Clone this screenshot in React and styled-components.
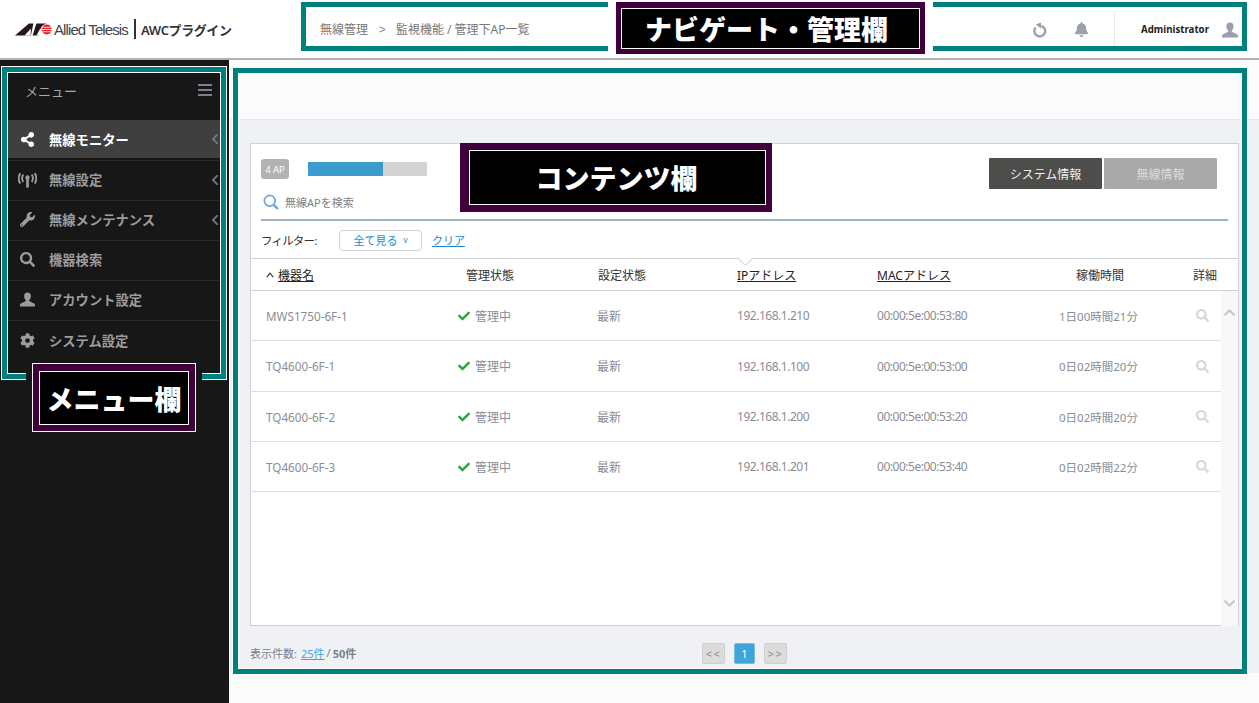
import React from "react";
import styled, { createGlobalStyle } from "styled-components";
import {
  FaShareAlt,
  FaWrench,
  FaSearch,
  FaCog,
  FaCheck,
  FaBell,
  FaChevronLeft,
  FaChevronUp,
  FaChevronDown,
} from "react-icons/fa";

const FONT = `"Noto Sans", "Noto Sans CJK JP", sans-serif`;

const menuItems = [
  { label: "無線モニター", icon: <FaShareAlt />, active: true, arrow: true },
  { label: "無線設定", icon: <AntennaIcon />, arrow: true },
  { label: "無線メンテナンス", icon: <FaWrench />, arrow: true },
  { label: "機器検索", icon: <FaSearch /> },
  { label: "アカウント設定", icon: <PersonIcon /> },
  { label: "システム設定", icon: <FaCog /> },
];

const rows = [
  { name: "MWS1750-6F-1", ip: "192.168.1.210", mac: "00:00:5e:00:53:80", time: "1日00時間21分" },
  { name: "TQ4600-6F-1", ip: "192.168.1.100", mac: "00:00:5e:00:53:00", time: "0日02時間20分" },
  { name: "TQ4600-6F-2", ip: "192.168.1.200", mac: "00:00:5e:00:53:20", time: "0日02時間20分" },
  { name: "TQ4600-6F-3", ip: "192.168.1.201", mac: "00:00:5e:00:53:40", time: "0日02時間22分" },
];

function AntennaIcon() {
  return (
    <svg viewBox="0 0 20 16" width="19" height="16" fill="none" stroke="currentColor" strokeWidth="2">
      <path d="M5.6 2.4a6.5 6.5 0 0 0 0 7.6M14.4 2.4a6.5 6.5 0 0 1 0 7.6" />
      <path d="M2.4 0.8a10.5 10.5 0 0 0 0 11M17.6 0.8a10.5 10.5 0 0 1 0 11" />
      <circle cx="10" cy="5.4" r="2.3" fill="currentColor" stroke="none" />
      <path d="M10 6v10" strokeWidth="2.8" />
    </svg>
  );
}

function PersonIcon() {
  return (
    <svg viewBox="0 0 16 16" width="1em" height="1em" fill="currentColor">
      <path d="M8 .5a3.6 4 0 0 1 3.6 4c0 2-1 3.500-1.800 4.200v1l4.700 2.200c.9.4 1.500 1 1.500 2v1.600H0v-1.600c0-1 .6-1.600 1.500-2l4.700-2.200v-1C5.400 8 4.400 6.500 4.400 4.500A3.600 4 0 0 1 8 .5z" />
    </svg>
  );
}

function LogoMark() {
  return (
    <svg viewBox="0 0 38 13" width="38" height="13">
      <path d="M0 12.500 L14 0.500 H31 L24 12.500 Z" fill="#231815" />
      <path d="M9.500 12.500 L16 5.500 L15.500 12.500 Z" fill="#fff" />
      <path d="M18.500 0 H21.500 L17.500 13 H15.800 Z" fill="#fff" />
      <path d="M25.500 5 L21.500 12.500 H27 Z" fill="#fff" />
      <circle cx="31.800" cy="6.500" r="5.700" fill="#fff" />
      <circle cx="31.800" cy="6.500" r="5" fill="#e4202c" />
      <path d="M26 4.300H38M26 6.500H38M26 8.700H38" stroke="#fff" strokeWidth="0.8" />
    </svg>
  );
}

function RefreshIcon() {
  return (
    <svg viewBox="0 0 16 16" width="16" height="16" fill="none" stroke="currentColor" strokeWidth="2.400">
      <path d="M9.500 3.900A5.400 5.400 0 1 1 3.600 5.600" />
      <path d="M3.800 2.400 L9 0.600 L9.200 6.800 Z" fill="currentColor" stroke="none" />
    </svg>
  );
}

function App() {
  return (
    <Page>
      <GlobalStyle />
      <Header>
        <Brand>
          <LogoMark />
          <BrandName>Allied Telesis</BrandName>
          <BrandDivider />
          <PluginName>AWCプラグイン</PluginName>
        </Brand>
        <Breadcrumb>
          <span>無線管理</span>
          <CrumbSeparator>&gt;</CrumbSeparator>
          <span>監視機能 / 管理下AP一覧</span>
        </Breadcrumb>
        <HeaderActions>
          <ActionIcon>
            <RefreshIcon />
          </ActionIcon>
          <ActionIcon>
            <FaBell />
          </ActionIcon>
          <UserArea>
            <UserName>Administrator</UserName>
            <UserIcon>
              <PersonIcon />
            </UserIcon>
          </UserArea>
        </HeaderActions>
      </Header>

      <Body>
        <Sidebar>
          <MenuTitle>
            <span>メニュー</span>
            <Hamburger>
              <i />
              <i />
              <i />
            </Hamburger>
          </MenuTitle>
          {menuItems.map((item) => (
            <MenuItem key={item.label} $active={item.active}>
              <MenuIcon>{item.icon}</MenuIcon>
              <MenuLabel>{item.label}</MenuLabel>
              {item.arrow && (
                <MenuArrow>
                  <FaChevronLeft />
                </MenuArrow>
              )}
            </MenuItem>
          ))}
        </Sidebar>

        <Main>
          <TopBand />
          <Workspace>
            <Card>
              <CardTop>
                <div>
                  <StatusLine>
                    <ApBadge>4 AP</ApBadge>
                    <Progress>
                      <ProgressFill style={{ width: `${(75 / 119) * 100}%` }} />
                    </Progress>
                  </StatusLine>
                  <SearchLine>
                    <SearchIcon>
                      <svg viewBox="0 0 16 16" width="16" height="16" fill="none" stroke="currentColor">
                        <circle cx="6.800" cy="6.800" r="5.400" strokeWidth="1.700" />
                        <path d="M10.800 10.800 L15 15" strokeWidth="2.400" />
                      </svg>
                    </SearchIcon>
                    <span>無線APを検索</span>
                  </SearchLine>
                </div>
                <Tabs>
                  <Tab $active>システム情報</Tab>
                  <Tab>無線情報</Tab>
                </Tabs>
              </CardTop>

              <FilterRow>
                <FilterLabel>フィルター:</FilterLabel>
                <FilterSelect>
                  全て見る<small>v</small>
                </FilterSelect>
                <ClearLink>クリア</ClearLink>
              </FilterRow>

              <TableHead>
                <HeadCell $indent={0}>
                  <SortCaret>
                    <svg viewBox="0 0 8 6" width="8" height="6" fill="none" stroke="currentColor" strokeWidth="1.100">
                      <path d="M0.800 5.200 L4 1.200 L7.200 5.200" />
                    </svg>
                  </SortCaret>
                  <SortLink>機器名</SortLink>
                </HeadCell>
                <HeadCell $indent={8}>管理状態</HeadCell>
                <HeadCell $indent={1}>設定状態</HeadCell>
                <HeadCell $indent={0}>
                  <SortLink>IPアドレス</SortLink>
                </HeadCell>
                <HeadCell $indent={0}>
                  <SortLink>MACアドレス</SortLink>
                </HeadCell>
                <HeadCell $indent={17}>稼働時間</HeadCell>
                <HeadCell $indent={-3}>詳細</HeadCell>
                <HeadNotch />
              </TableHead>

              <TableBody>
                <Rows>
                  {rows.map((row) => (
                    <Row key={row.name}>
                      <Cell $size={11.700}>{row.name}</Cell>
                      <Cell>
                        <CheckMark>
                          <FaCheck />
                        </CheckMark>
                        管理中
                      </Cell>
                      <Cell>最新</Cell>
                      <Cell $tight>{row.ip}</Cell>
                      <Cell $tight>{row.mac}</Cell>
                      <Cell $size={11.500}>{row.time}</Cell>
                      <Cell>
                        <DetailIcon>
                          <FaSearch />
                        </DetailIcon>
                      </Cell>
                    </Row>
                  ))}
                </Rows>
                <ScrollRail>
                  <FaChevronUp />
                  <FaChevronDown />
                </ScrollRail>
              </TableBody>
            </Card>

            <Footer>
              <PageCount>
                表示件数: <PageSizeLink>25件</PageSizeLink> / <b>50件</b>
              </PageCount>
              <Pager>
                <PageButton>&lt;&lt;</PageButton>
                <PageButton $current>1</PageButton>
                <PageButton>&gt;&gt;</PageButton>
              </Pager>
            </Footer>
          </Workspace>
        </Main>
      </Body>

      {/* annotations drawn over the screen */}
      <NavFrame />
      <NavGap />
      <NavCallout>ナビゲート・管理欄</NavCallout>
      <MenuFrame />
      <MenuGap />
      <MenuCallout>メニュー欄</MenuCallout>
      <ContentFrame />
      <ContentCallout>コンテンツ欄</ContentCallout>
    </Page>
  );
}

const GlobalStyle = createGlobalStyle`
  html, body {
    margin: 0;
    padding: 0;
    background: #fbfbfb;
  }
  * {
    box-sizing: border-box;
  }
`;

const Page = styled.div`
  position: relative;
  width: 1259px;
  height: 703px;
  overflow: hidden;
  font-family: ${FONT};
  font-size: 12px;
  color: #777;
`;

const Header = styled.header`
  display: flex;
  align-items: center;
  height: 60px;
  background: #fff;
  border-bottom: 2px solid #b2b2b2;
`;

const Brand = styled.div`
  display: flex;
  align-items: center;
  width: 320px;
  padding-left: 15px;
  color: #333;
`;

const BrandName = styled.span`
  margin-left: 1px;
  width: 78px;
  font-family: "Liberation Sans", sans-serif;
  font-size: 15px;
  letter-spacing: -0.9px;
  white-space: nowrap;
  color: #444;
`;

const BrandDivider = styled.i`
  width: 2px;
  height: 20px;
  margin: 0 5px 0 2px;
  background: #333;
`;

const PluginName = styled.span`
  font-size: 13px;
  font-weight: 600;
  letter-spacing: -0.4px;
  white-space: nowrap;
  color: #333;
`;

const Breadcrumb = styled.nav`
  display: flex;
  align-items: center;
  font-size: 12px;
  color: #777;
`;

const CrumbSeparator = styled.span`
  margin: 0 10px 0 11px;
`;

const HeaderActions = styled.div`
  display: flex;
  align-items: center;
  margin-left: auto;
  height: 34px;
  margin-top: 1px;
  padding-right: 21px;
`;

const ActionIcon = styled.span`
  display: flex;
  justify-content: center;
  width: 16px;
  margin-right: 25px;
  font-size: 15px;
  color: #9aa0ad;
`;

const UserArea = styled.div`
  display: flex;
  align-items: center;
  height: 34px;
  margin-left: 0;
  padding-left: 26px;
  border-left: 1px solid #e8e8e8;
`;

const UserName = styled.span`
  font-size: 9.700px;
  font-weight: 700;
  color: #222;
`;

const UserIcon = styled.span`
  display: flex;
  margin-left: 13px;
  font-size: 16px;
  color: #9aa0ad;
`;

const Body = styled.div`
  display: flex;
  height: 643px;
`;

const Sidebar = styled.aside`
  flex: 0 0 229px;
  margin-right: 1px;
  padding: 0 9px 0 8px;
  background: #171717;
`;

const MenuTitle = styled.div`
  display: flex;
  align-items: center;
  justify-content: space-between;
  height: 60px;
  padding: 0 8px 0 17px;
  font-size: 13px;
  color: #a8a8a8;
`;

const Hamburger = styled.div`
  display: flex;
  flex-direction: column;
  gap: 3px;

  i {
    display: block;
    width: 14px;
    height: 2px;
    background: #7d818c;
  }
`;

const MenuItem = styled.div`
  display: flex;
  align-items: center;
  height: ${(p) => (p.$active ? "41px" : "40px")};
  padding-bottom: 2px;
  border-bottom: 1px solid #2b2b2b;
  background: ${(p) => (p.$active ? "#3f3f3f" : "#171717")};
  background-clip: content-box;
  color: ${(p) => (p.$active ? "#fff" : "#9c9c9c")};

  &:last-child {
    border-bottom: none;
  }
`;

const MenuIcon = styled.span`
  display: flex;
  justify-content: center;
  width: 24px;
  margin-left: 7px;
  font-size: 15px;
`;

const MenuLabel = styled.span`
  margin-left: 10px;
  font-size: 13.300px;
  font-weight: 700;
`;

const MenuArrow = styled.span`
  display: flex;
  margin-left: auto;
  margin-right: -1px;
  font-size: 12px;
  color: #6d7688;
`;

const Main = styled.main`
  flex: 1;
  display: flex;
  flex-direction: column;
`;

const TopBand = styled.div`
  height: 60px;
  background: #fbfbfb;
  border-bottom: 1px solid #e6e6e6;
`;

const Workspace = styled.div`
  height: 553px;
  padding: 23px 20px 0;
  background: #f0f1f5;
`;

const Card = styled.section`
  height: 483px;
  background: #fff;
  border: 1px solid #cfd1d6;
`;

const CardTop = styled.div`
  display: flex;
  justify-content: space-between;
  height: 77px;
  margin: 0 10px;
  padding-top: 14px;
  border-bottom: 2px solid #9fb3c5;
`;

const StatusLine = styled.div`
  display: flex;
  align-items: center;
  margin-top: 1px;
`;

const ApBadge = styled.span`
  display: flex;
  align-items: center;
  justify-content: center;
  width: 28px;
  height: 20px;
  border-radius: 3px;
  background: #b2b2b2;
  font-size: 9.500px;
  color: #fff;
`;

const Progress = styled.div`
  width: 119px;
  height: 14px;
  margin-left: 19px;
  background: #d3d3d3;
`;

const ProgressFill = styled.div`
  height: 100%;
  background: #3a9bcf;
`;

const SearchLine = styled.div`
  display: flex;
  align-items: center;
  margin-top: 15px;
  margin-left: 2px;
  font-size: 11px;
  color: #808080;
`;

const SearchIcon = styled.span`
  display: flex;
  margin-right: 6px;
  color: #6ea6d8;
`;

const Tabs = styled.div`
  display: flex;
  gap: 2px;
  height: 31px;
  margin-right: 11px;
`;

const Tab = styled.button`
  width: 113px;
  padding: 0;
  border: none;
  border-radius: 1px;
  background: ${(p) => (p.$active ? "#4d4d4b" : "#a9a9a9")};
  color: ${(p) => (p.$active ? "#f2f2f2" : "#dcdcdc")};
  font-family: ${FONT};
  font-size: 12px;
`;

const FilterRow = styled.div`
  display: flex;
  align-items: center;
  height: 37px;
  padding-left: 10px;
  padding-top: 1px;
`;

const FilterLabel = styled.span`
  width: 78px;
  font-size: 11.500px;
  letter-spacing: -0.800px;
  color: #333;
`;

const FilterSelect = styled.div`
  display: flex;
  align-items: center;
  justify-content: center;
  gap: 6px;
  width: 83px;
  height: 21px;
  border: 1px solid #cfd3d6;
  border-radius: 4px;
  font-size: 11px;
  color: #1e88c9;

  small {
    font-size: 8px;
    margin-top: -2px;
  }
`;

const ClearLink = styled.a`
  margin-left: 10px;
  font-size: 11px;
  color: #1e88c9;
  text-decoration: underline;
`;

const COLUMNS = "207px 139px 140px 140px 182px 137px 1fr";

const TableHead = styled.div`
  position: relative;
  display: grid;
  grid-template-columns: ${COLUMNS};
  align-items: center;
  height: 33px;
  border-top: 1px solid #cdd3d6;
  border-bottom: 1px solid #cdd3d6;
`;

const HeadCell = styled.div`
  display: flex;
  align-items: center;
  margin-left: ${(p) => p.$indent}px;
  font-size: 12px;
  color: #333;
  &:first-child {
    padding-left: 15px;
  }
`;

const SortCaret = styled.span`
  display: flex;
  width: 12px;
  margin-top: 1px;
`;

const SortLink = styled.span`
  color: #222;
  text-decoration: underline;
`;

const HeadNotch = styled.i`
  position: absolute;
  left: 487px;
  top: -1px;
  width: 14px;
  height: 7px;
  overflow: hidden;

  &::after {
    content: "";
    position: absolute;
    left: 2px;
    top: -5px;
    width: 10px;
    height: 10px;
    background: #fff;
    border-right: 1px solid #cdd3d6;
    border-bottom: 1px solid #cdd3d6;
    transform: rotate(45deg);
  }
`;

const TableBody = styled.div`
  display: flex;
  height: 335px;
`;

const Rows = styled.div`
  flex: 1;
`;

const Row = styled.div`
  display: grid;
  grid-template-columns: ${COLUMNS};
  align-items: center;
  height: 50px;
  border-bottom: 1px solid #dcdfe2;

  &:nth-child(2) {
    height: 51px;
  }
`;

const Cell = styled.div`
  display: flex;
  align-items: center;
  font-size: ${(p) => p.$size || 12}px;
  letter-spacing: ${(p) => (p.$tight ? "-0.480px" : "0")};
  color: #8a8d94;
  &:first-child {
    padding-left: 15px;
  }
`;

const CheckMark = styled.span`
  display: flex;
  margin-right: 5px;
  font-size: 12px;
  color: #2aa53e;
`;

const DetailIcon = styled.span`
  display: flex;
  font-size: 13px;
  color: #d6d6d6;
`;

const ScrollRail = styled.div`
  display: flex;
  flex-direction: column;
  justify-content: space-between;
  align-items: center;
  width: 17px;
  padding: 15px 0 16px;
  background: #f8f8f8;
  font-size: 13px;
  color: #c6c6c6;
`;

const Footer = styled.div`
  display: grid;
  grid-template-columns: 452px auto;
  padding-top: 17px;
`;

const PageCount = styled.div`
  display: flex;
  align-items: center;
  gap: 2px;
  height: 19px;
  font-size: 11px;
  color: #7c7f88;

  b {
    font-weight: 700;
  }
`;

const PageSizeLink = styled.a`
  margin-left: 2px;
  color: #3ea6dc;
  text-decoration: underline;
`;

const Pager = styled.div`
  display: flex;
  gap: 9px;
`;

const PageButton = styled.div`
  display: flex;
  align-items: center;
  justify-content: center;
  width: ${(p) => (p.$current ? "21px" : "23px")};
  height: 21px;
  border: 1px solid ${(p) => (p.$current ? "#7db9dd" : "#cfcfcf")};
  border-radius: 2px;
  background: ${(p) => (p.$current ? "#3da5da" : "#dcdcdc")};
  color: ${(p) => (p.$current ? "#fff" : "#8a8a8a")};
  font-size: 11px;
  letter-spacing: ${(p) => (p.$current ? "0" : "1.500px")};
`;

const NavFrame = styled.div`
  position: absolute;
  left: 301px;
  top: 2px;
  width: 946px;
  height: 49px;
  border: 5px solid #00807c;
`;

const NavGap = styled.div`
  position: absolute;
  left: 608px;
  top: 1px;
  width: 325px;
  height: 52px;
  background: #fff;
`;

const MenuFrame = styled.div`
  position: absolute;
  left: 2px;
  top: 67px;
  width: 224px;
  height: 312px;
  border: 5px solid #00807c;
  box-shadow: 0 0 0 1px #fff, inset 0 0 0 1px #fff;
`;

const MenuGap = styled.div`
  position: absolute;
  left: 26px;
  top: 372px;
  width: 176px;
  height: 9px;
  background: #171717;
`;

const ContentFrame = styled.div`
  position: absolute;
  left: 233px;
  top: 68px;
  width: 1014px;
  height: 606px;
  border: 5px solid #00807c;
  box-shadow: 0 0 0 1px #fff, inset 0 0 0 1px #fff;
`;

const Callout = styled.div`
  position: absolute;
  display: flex;
  align-items: center;
  justify-content: center;
  background: #000;
  border-style: solid;
  border-color: #3f003c;
  color: #fff;
  font-family: "Noto Sans CJK JP", sans-serif;
  font-size: 27px;
  font-weight: 900;
  white-space: nowrap;
`;

const NavCallout = styled(Callout)`
  left: 616px;
  top: 2px;
  width: 309px;
  height: 52px;
  padding-right: 8px;
  border-width: 6px 5px 5px 5px;
  box-shadow: inset 0 0 0 1px #fff;
`;

const MenuCallout = styled(Callout)`
  left: 33px;
  top: 364px;
  width: 162px;
  height: 67px;
  border-width: 7px 6px 6px 6px;
  box-shadow: inset 0 0 0 1px #fff, 0 0 0 1px #fff;
`;

const ContentCallout = styled(Callout)`
  left: 460px;
  top: 143px;
  width: 312px;
  height: 69px;
  padding-right: 2px;
  border-width: 7px 6px 7px 9px;
  box-shadow: inset 0 0 0 1px #fff;
`;

export default App;
